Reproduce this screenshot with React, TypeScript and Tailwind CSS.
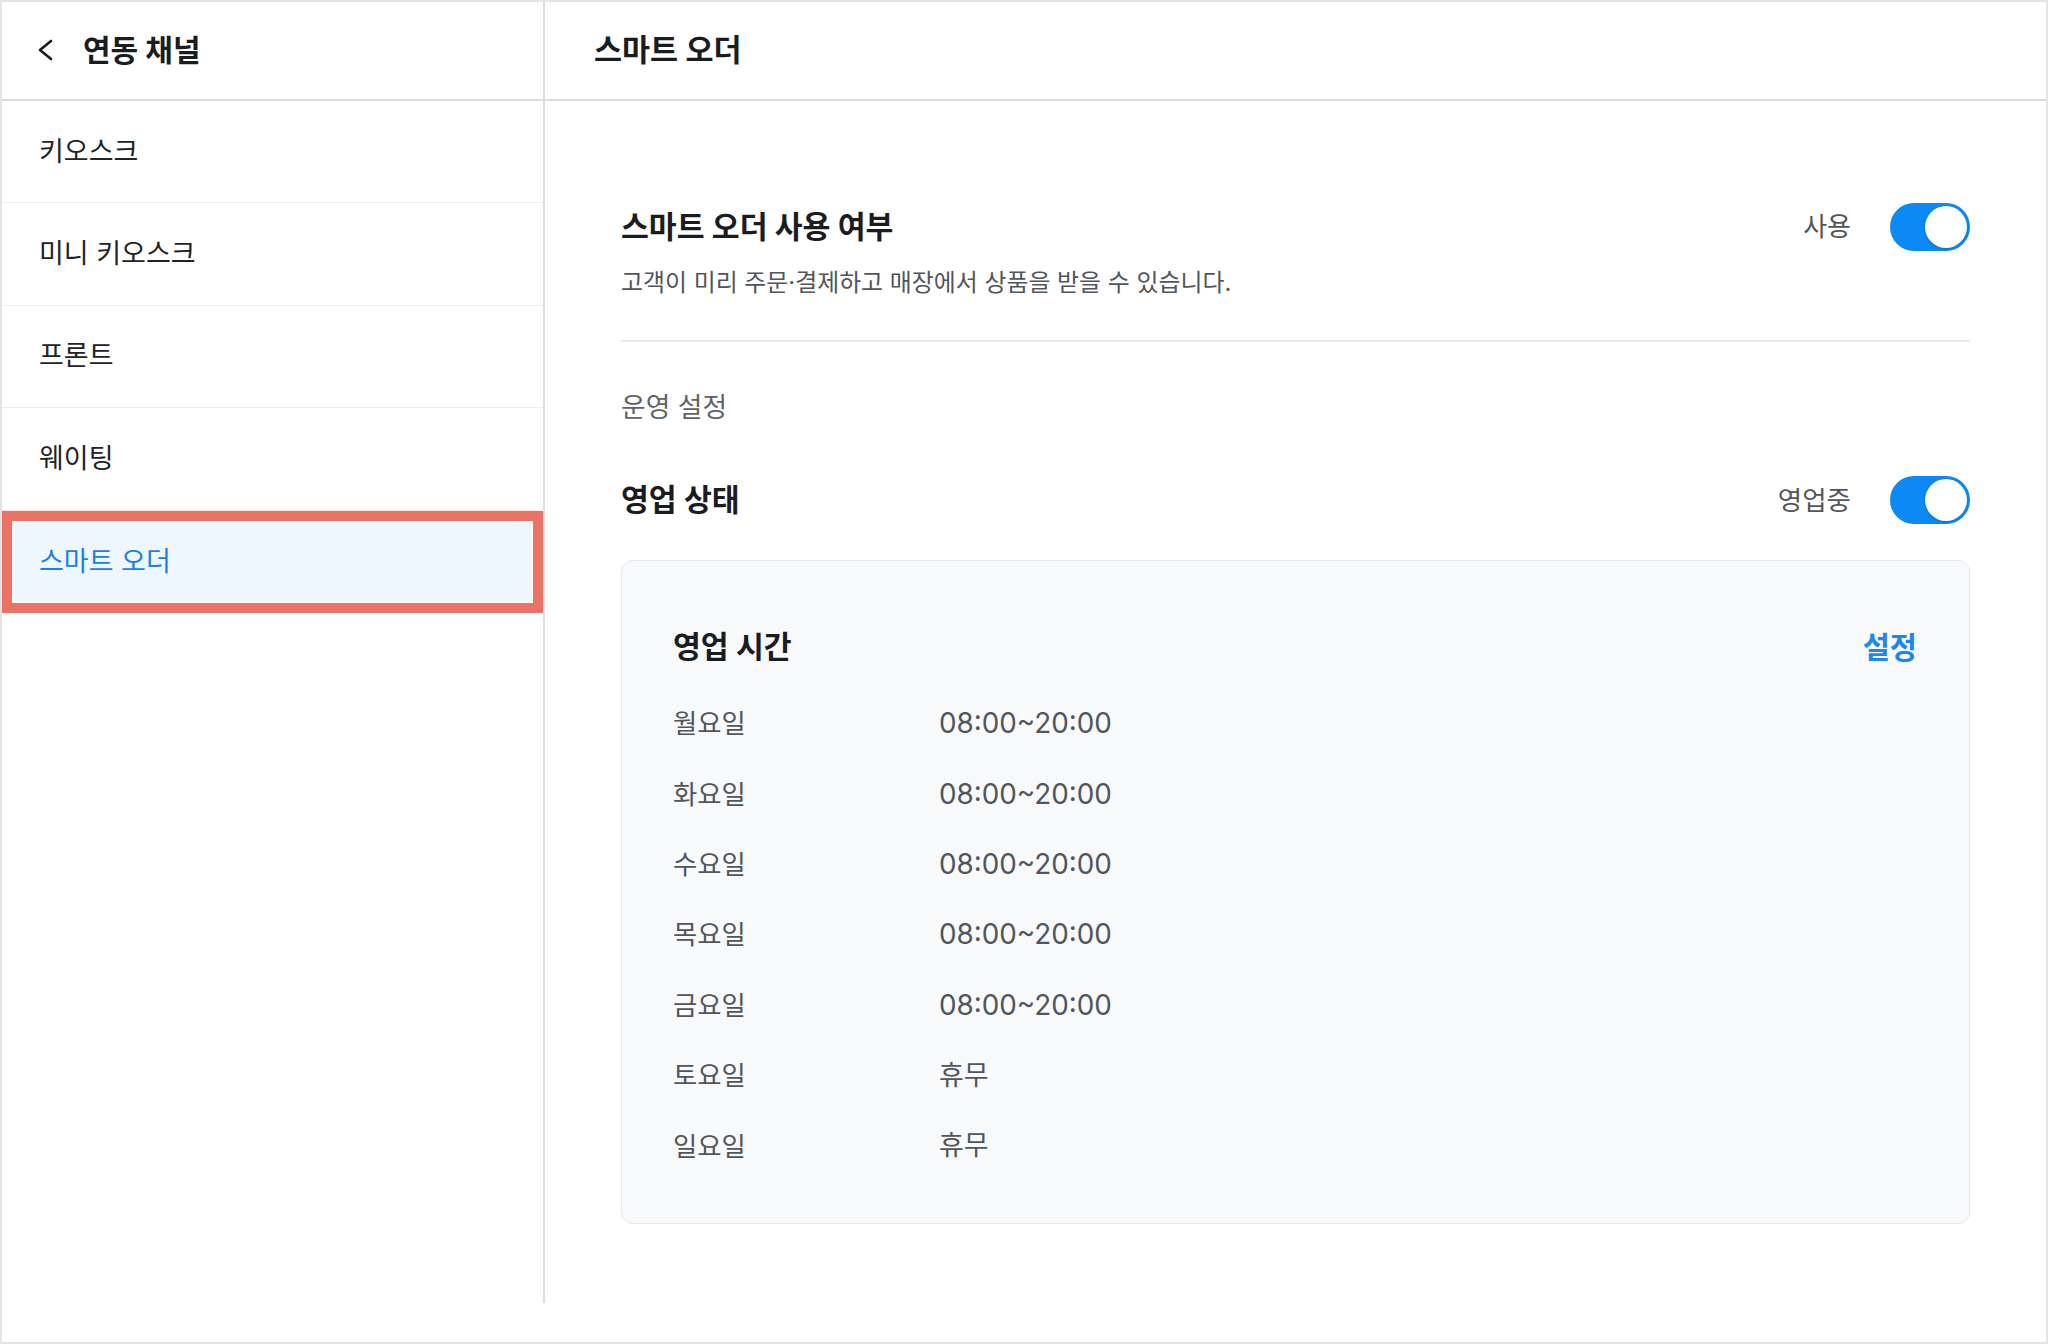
import React from 'react'

const channels = ['키오스크', '미니 키오스크', '프론트', '웨이팅', '스마트 오더']

const hours = [
  { day: '월요일', time: '08:00~20:00' },
  { day: '화요일', time: '08:00~20:00' },
  { day: '수요일', time: '08:00~20:00' },
  { day: '목요일', time: '08:00~20:00' },
  { day: '금요일', time: '08:00~20:00' },
  { day: '토요일', time: '휴무' },
  { day: '일요일', time: '휴무' },
]

function Toggle() {
  return (
    <div className="flex h-[48px] w-[80px] items-center justify-end rounded-full bg-[#0b89f5] p-[3px]">
      <div className="h-[42px] w-[42px] rounded-full bg-white shadow-[0_1px_3px_rgba(0,0,0,0.18)]" />
    </div>
  )
}

export default function App() {
  const active = '스마트 오더'

  return (
    <div
      className="h-[1344px] w-[2048px] border-2 border-[#e4e4e6] bg-white text-[#1b1c1f]"
      style={{ fontFamily: "Inter, 'Noto Sans CJK KR', sans-serif" }}
    >
      <div className="flex h-[1301px]">
        {/* Channel list */}
        <aside className="flex w-[543px] shrink-0 flex-col border-r-2 border-[#dcdde1]">
          <div className="flex h-[99px] shrink-0 items-center gap-[30px] border-b-2 border-[#dcdde1] pb-[2px] pl-[35px]">
            <svg width="16" height="24" viewBox="0 0 16 24" fill="none">
              <polyline points="14,3 3,12 14,21" stroke="#1b1c1f" strokeWidth="2.6" strokeLinecap="round" strokeLinejoin="round" />
            </svg>
            <h1 className="text-[30px] font-bold leading-[40px]">연동 채널</h1>
          </div>
          {channels.map((name) =>
            name === active ? (
              <div key={name} className="h-[102.4px] border-[10px] border-[#ec7264]">
                <div className="flex h-full items-center border border-white/80 bg-[#eef6fe] pl-[26px] text-[27px] leading-[36px] text-[#1a80e6]">
                  {name}
                </div>
              </div>
            ) : (
              <div
                key={name}
                className="flex h-[102.4px] items-center border-b border-[#eceef0] pl-[37px] text-[27px] leading-[36px] text-[#222326]"
              >
                {name}
              </div>
            )
          )}
        </aside>

        {/* Smart order settings */}
        <main className="flex min-w-0 flex-1 flex-col">
          <div className="flex h-[99px] shrink-0 items-center border-b-2 border-[#dcdde1] pb-[2px] pl-[49px]">
            <h2 className="text-[30.5px] font-bold leading-[40px]">스마트 오더</h2>
          </div>

          <div className="px-[76px] pt-[102px]">
            <div className="flex h-[48px] items-center justify-between">
              <h3 className="text-[30.3px] font-bold leading-[40px]">스마트 오더 사용 여부</h3>
              <div className="flex items-center gap-[39px]">
                <span className="text-[26px] leading-[34px] text-[#51555c]">사용</span>
                <Toggle />
              </div>
            </div>
            <p className="mt-[16px] text-[23.9px] leading-[32px] text-[#51555c]">
              고객이 미리 주문·결제하고 매장에서 상품을 받을 수 있습니다.
            </p>
            <div className="mt-[41px] h-[2px] bg-[#e9eaec]" />

            <div className="mt-[49px] text-[26.8px] leading-[32px] text-[#5f636a]">운영 설정</div>

            <div className="mt-[53px] flex h-[48px] items-center justify-between">
              <h3 className="text-[30.3px] font-bold leading-[40px]">영업 상태</h3>
              <div className="flex items-center gap-[39px]">
                <span className="text-[26.5px] leading-[34px] text-[#51555c]">영업중</span>
                <Toggle />
              </div>
            </div>

            <section className="mt-[36px] h-[664px] rounded-[12px] border border-[#e4e6e9] bg-[#f8f9fb] pl-[51px] pr-[52px] pt-[66px]">
              <div className="flex h-[40px] items-center justify-between">
                <h4 className="text-[30.3px] font-bold leading-[40px]">영업 시간</h4>
                <button className="text-[29.5px] font-bold leading-[40px] text-[#1a88f0]">설정</button>
              </div>
              <div className="mt-[21px]">
                {hours.map((h) => (
                  <div key={h.day} className="flex h-[70.4px] items-center text-[#51555c]">
                    <span className="w-[266px] text-[26.4px] leading-[34px]">{h.day}</span>
                    <span className="text-[27.8px] leading-[34px]">
                      {h.time === '휴무' ? <span className="text-[27px]">{h.time}</span> : h.time}
                    </span>
                  </div>
                ))}
              </div>
            </section>
          </div>
        </main>
      </div>
    </div>
  )
}
